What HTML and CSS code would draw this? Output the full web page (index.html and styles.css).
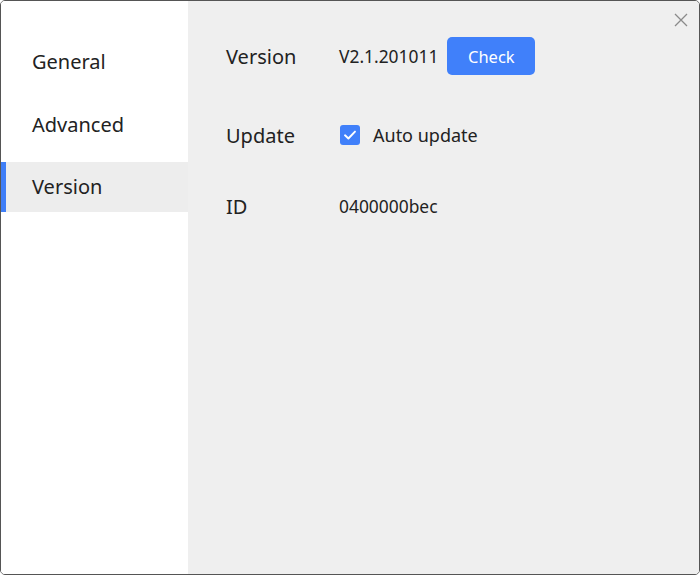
FILE: index.html
```html
<!DOCTYPE html>
<html lang="en">
<head>
  <meta charset="UTF-8" />
  <title>Settings</title>
  <link rel="stylesheet" href="styles.css">
</head>
<body>
  <div class="window">
    <div class="sidebar">
      <div class="nav-item">General</div>
      <div class="nav-item">Advanced</div>
      <div class="nav-item active">Version</div>
    </div>
    <div class="content">
      <div class="row row-version">
        <div class="label">Version</div>
        <div class="value">V2.1.201011</div>
        <button class="check-btn">Check</button>
      </div>
      <div class="row row-update">
        <div class="label">Update</div>
        <label class="checkbox">
          <span class="box">
            <svg width="16" height="16" viewBox="0 0 16 16"><path d="M3 8.3 L6.4 11.5 L13 4.6" fill="none" stroke="#fff" stroke-width="1.9" stroke-linecap="round" stroke-linejoin="round"/></svg>
          </span>
          <span class="check-text">Auto update</span>
        </label>
      </div>
      <div class="row row-id">
        <div class="label">ID</div>
        <div class="value">0400000bec</div>
      </div>
    </div>
    <div class="close">
      <svg width="16" height="16" viewBox="0 0 16 16"><path d="M2 2 L14 14 M14 2 L2 14" stroke="#8a8a8a" stroke-width="1.3" fill="none"/></svg>
    </div>
  </div>
</body>
</html>
```

FILE: styles.css
```css
body {
  margin: 0;
  padding: 0;
  background: #fff;
  font-family: "Noto Sans", "Open Sans", sans-serif;
  color: #222;
}
.window {
  position: relative;
  width: 700px;
  height: 575px;
  box-sizing: border-box;
  border: 1px solid #555;
  border-radius: 5px;
  display: flex;
  overflow: hidden;
}
.sidebar {
  width: 187px;
  background: #fff;
  padding-top: 36px;
}
.nav-item {
  height: 50px;
  line-height: 50px;
  padding-left: 31px;
  margin-bottom: 12.5px;
  font-size: 20px;
}
.nav-item.active {
  background: #ededed;
  border-left: 5px solid #3f7ef7;
  padding-left: 26px;
}
.content {
  flex: 1;
  background: #efefef;
  padding: 36px 0 0 38px;
}
.row {
  display: flex;
  align-items: center;
  height: 38px;
}
.row-update {
  margin-top: 41px;
}
.row-id {
  margin-top: 33px;
}
.label {
  width: 113px;
  font-size: 20px;
}
.value {
  font-size: 17.4px;
}
.check-btn {
  margin-left: 9px;
  width: 88px;
  height: 38px;
  border: none;
  border-radius: 5px;
  background: #4080fa;
  color: #fff;
  font-family: inherit;
  font-size: 16.5px;
  cursor: pointer;
}
.checkbox {
  display: flex;
  align-items: center;
  font-size: 18px;
}
.box {
  width: 20px;
  height: 20px;
  border-radius: 3px;
  background: #4080fa;
  display: flex;
  align-items: center;
  justify-content: center;
  margin-left: 1px;
}
.check-text {
  margin-left: 13px;
}
.close {
  position: absolute;
  top: 10px;
  right: 10px;
  width: 16px;
  height: 16px;
}
```
